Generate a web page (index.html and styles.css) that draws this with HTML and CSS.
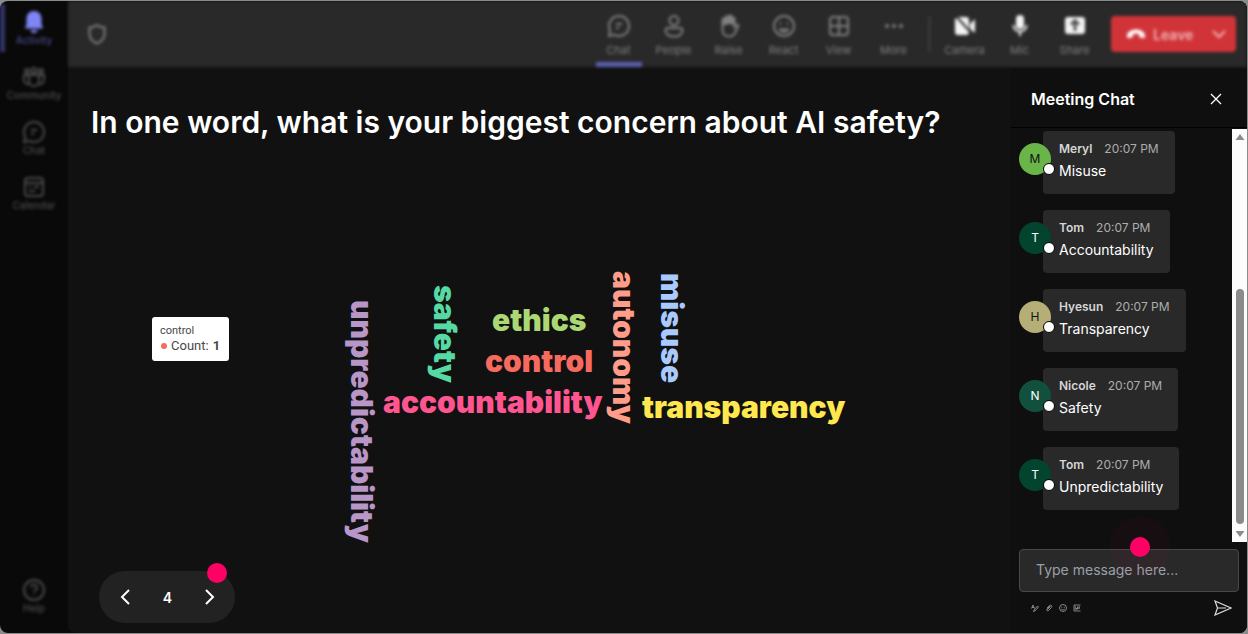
FILE: index.html
```html
<!DOCTYPE html>
<html lang="en">
<head>
<meta charset="utf-8">
<title>Meeting</title>
<link rel="stylesheet" href="styles.css">
</head>
<body>
<div class="shell">
  <nav class="rail">
    <button class="rail-item rail-active"><svg class="rail-icon" viewBox="0 0 24 24"><path class="solid" d="M12 1C7.500 1 4.500 4.500 4.500 9v5L3 18.500h18L19.500 14V9C19.500 4.500 16.500 1 12 1zM8.500 20a3.500 3 0 0 0 7 0z"/></svg>Activity</button>
    <button class="rail-item"><svg class="rail-icon" viewBox="0 0 24 24"><circle cx="12" cy="5.500" r="2.500"/><circle cx="5" cy="6" r="2"/><circle cx="19" cy="6" r="2"/><path d="M7 10h10v6a5 5 0 0 1-10 0zM7 10H2v5a4 4 0 0 0 5 4M17 10h5v5a4 4 0 0 1-5 4"/></svg>Community</button>
    <button class="rail-item"><svg class="rail-icon" viewBox="0 0 24 24"><path d="M12 2a10 10 0 1 1-4.700 18.800L2 22l1.200-5.300A10 10 0 0 1 12 2zM9 10h6M9 14h3"/></svg>Chat</button>
    <button class="rail-item"><svg class="rail-icon" viewBox="0 0 24 24"><rect x="3" y="3" width="18" height="18" rx="3"/><path d="M3 8h18M7 12h2M12 12h5M7 16h6"/></svg>Calendar</button>
    <button class="rail-item rail-help"><svg class="rail-icon" viewBox="0 0 24 24"><circle cx="12" cy="12" r="10"/><path d="M9 9.500a3 3 0 1 1 4.500 2.600c-1 .6-1.500 1-1.500 2.100M12 16.500v1"/></svg>Help</button>
  </nav>

  <div class="main">
    <header class="toolbar">
      <svg class="shield" viewBox="0 0 24 24"><path d="M12 3c2 1.600 4.500 2.500 7.500 2.600V12c0 4.500-3 7.500-7.500 9.500C7.500 19.500 4.500 16.500 4.500 12V5.600C7.500 5.500 10 4.600 12 3z"/></svg>
      <button class="tool tool-current"><svg class="tool-icon" viewBox="0 0 24 24"><path d="M12 2a10 10 0 1 1-4.700 18.800L2 22l1.200-5.300A10 10 0 0 1 12 2zM9 10h6M9 14h3"/></svg>Chat</button>
      <button class="tool"><svg class="tool-icon" viewBox="0 0 24 24"><circle cx="12" cy="6.500" r="4.500"/><path d="M6 14h12a2.500 2.500 0 0 1 2.500 2.500C20.500 20 17 22.500 12 22.500S3.500 20 3.500 16.500A2.500 2.500 0 0 1 6 14z"/></svg>People</button>
      <button class="tool"><svg class="tool-icon" viewBox="0 0 24 24"><path class="solid" d="M5 12V6l3-3 4-2 3 1 3 3v6l-6-1z"/><path d="M5.500 13V6a1.500 1.500 0 0 1 3 0V4a1.500 1.500 0 0 1 3 0V3a1.500 1.500 0 0 1 3 0v2a1.500 1.500 0 0 1 3 0v8l1.800-2c1-.8 2.500 0 2 1.200L18 19c-1.200 2.300-3 3.500-6 3.500-4 0-6.500-3-6.500-7z"/></svg>Raise</button>
      <button class="tool"><svg class="tool-icon" viewBox="0 0 24 24"><circle cx="12" cy="12" r="10"/><path d="M8.500 8.500v2M15.500 8.500v2M7 15.500h10M8 16c2 2.500 6 2.500 8 0"/></svg>React</button>
      <button class="tool"><svg class="tool-icon" viewBox="0 0 24 24"><rect x="3" y="3" width="18" height="18" rx="3"/><path d="M12 3v18M3 12h18"/></svg>View</button>
      <button class="tool"><svg class="tool-icon" viewBox="0 0 24 24"><g class="solid"><circle cx="5" cy="12" r="2"/><circle cx="12" cy="12" r="2"/><circle cx="19" cy="12" r="2"/></g></svg>More</button>
      <span class="divider"></span>
      <button class="tool tool-bright"><svg class="tool-icon" viewBox="0 0 24 24"><path class="solid" d="M4 3h9a3 3 0 0 1 3 3v12a3 3 0 0 1-3 3H5a3 3 0 0 1-3-3V5zM17 10l5-5v14l-5-4z"/><path class="slash" d="M2 1l20 22"/></svg>Camera</button>
      <button class="tool tool-bright"><svg class="tool-icon" viewBox="0 0 24 24"><rect class="solid" x="8" y="1" width="8" height="14" rx="4"/><path d="M5.500 11a6.500 6.500 0 0 0 13 0M12 18v4"/></svg>Mic</button>
      <button class="tool tool-bright"><svg class="tool-icon" viewBox="0 0 24 24"><rect class="solid" x="2" y="3" width="20" height="17" rx="3"/><path class="cutout" d="M12 17V7M8 10.500L12 6.500l4 4"/></svg>Share</button>
      <button class="leave"><svg class="phone" viewBox="0 0 20 12"><path d="M1 8C1 4 5 1.500 10 1.500S19 4 19 8c0 1.500-.5 2.300-1.500 2.100L14.200 9.500c-.8-.2-1-.8-1-1.500L13 6.300c-2-.6-4-.6-6 0L6.800 8c0 .7-.2 1.300-1 1.500l-3.300.6C1.500 10.300 1 9.500 1 8z"/></svg>Leave<svg class="caret" viewBox="0 0 16 16"><path d="M2 5l6 6 6-6"/></svg></button>
    </header>

    <div class="content">
      <main class="stage">
        <h1 class="question">In one word, what is your biggest concern about AI safety?</h1>
        <div class="cloud">
          <span class="word vertical unpredictability">unpredictability</span>
          <span class="word vertical safety">safety</span>
          <span class="word ethics">ethics</span>
          <span class="word control">control</span>
          <span class="word accountability">accountability</span>
          <span class="word vertical autonomy">autonomy</span>
          <span class="word vertical misuse">misuse</span>
          <span class="word transparency">transparency</span>
          <div class="tooltip">
            <span class="tip-name">control</span>
            <span class="tip-row"><span class="tip-dot"></span>Count: <b>1</b></span>
          </div>
        </div>
        <div class="pager">
          <button class="page-btn" aria-label="Previous"><svg class="chevron" viewBox="0 0 16 16"><path d="M12 1L5 8l7 7"/></svg></button>
          <span class="page-no">4</span>
          <button class="page-btn" aria-label="Next"><svg class="chevron" viewBox="0 0 16 16"><path d="M4 1l7 7-7 7"/></svg></button>
          <span class="marker marker-pager"></span>
        </div>
      </main>

      <aside class="chat">
        <div class="chat-head">
          <h2 class="chat-title">Meeting Chat</h2>
          <button class="close" aria-label="Close"><svg class="close-icon" viewBox="0 0 12 12"><path d="M1 1l10 10M11 1L1 11"/></svg></button>
        </div>
        <div class="chat-body">
          <div class="messages">
            <article class="message"><span class="avatar lime">M</span><div class="card"><div class="meta"><b class="name">Meryl</b><time>20:07 PM</time></div><p class="text">Misuse</p></div></article>
            <article class="message"><span class="avatar forest">T</span><div class="card"><div class="meta"><b class="name">Tom</b><time>20:07 PM</time></div><p class="text">Accountability</p></div></article>
            <article class="message"><span class="avatar sand">H</span><div class="card"><div class="meta"><b class="name">Hyesun</b><time>20:07 PM</time></div><p class="text">Transparency</p></div></article>
            <article class="message"><span class="avatar pine">N</span><div class="card"><div class="meta"><b class="name">Nicole</b><time>20:07 PM</time></div><p class="text">Safety</p></div></article>
            <article class="message"><span class="avatar forest">T</span><div class="card"><div class="meta"><b class="name">Tom</b><time>20:07 PM</time></div><p class="text">Unpredictability</p></div></article>
          </div>
          <div class="scrollbar">
            <svg class="arrow" viewBox="0 0 10 8"><path d="M5 1l4.500 6h-9z"/></svg>
            <span class="thumb"></span>
            <svg class="arrow" viewBox="0 0 10 8"><path d="M5 7L.5 1h9z"/></svg>
          </div>
        </div>
        <div class="composer">
          <input class="field" type="text" placeholder="Type message here..." aria-label="Message">
          <span class="marker marker-chat"></span>
          <div class="actions">
            <button class="mini" aria-label="Format"><svg class="mini-icon" viewBox="0 0 16 16"><path d="M1 9l3-7 3 7M2 7h4M6 12l7-8 2 2-7 8-3 1z"/></svg></button>
            <button class="mini" aria-label="Attach"><svg class="mini-icon" viewBox="0 0 16 16"><path d="M5 11l6-6M4 8l5-5c3-2 6 1 4 4l-6 6c-3 2-5-1-3-3l6-6"/></svg></button>
            <button class="mini" aria-label="Emoji"><svg class="mini-icon" viewBox="0 0 16 16"><circle cx="8" cy="8" r="7"/><path d="M5.500 5.500v2M10.500 5.500v2M4.500 10c2 2.500 5 2.500 7 0"/></svg></button>
            <button class="mini" aria-label="GIF"><svg class="mini-icon" viewBox="0 0 16 16"><path d="M15 2H2v12h13M6 5.500H4.500v5H7V8M9 5v6M14 5.500h-2.500v5M11.500 8H14"/></svg></button>
            <button class="send" aria-label="Send"><svg class="send-icon" viewBox="0 0 18 16"><path d="M1 1l16 7-16 7 2.500-7zM3.500 8H12"/></svg></button>
          </div>
        </div>
      </aside>
    </div>
  </div>
</div>
</body>
</html>
```
FILE: styles.css
```css
*, *::before, *::after { box-sizing: border-box; }

body {
  margin: 0;
  padding: 1px 1px 1px 0;
  background: #8a8c8b;
  font-family: Inter, "Liberation Sans", sans-serif;
  color: #fff;
}

h1, h2, p { margin: 0; }

button {
  margin: 0;
  padding: 0;
  border: 0;
  background: none;
  color: inherit;
  font: inherit;
}

svg {
  display: block;
  fill: none;
  stroke: currentColor;
  stroke-width: 2;
}

.solid { fill: currentColor; stroke: none; }

.shell {
  display: grid;
  grid-template-columns: 68px 1fr;
  min-height: calc(100vh - 2px);
  border-radius: 8px;
  overflow: hidden;
  background: #090909;
}

/* Left rail */
.rail {
  display: flex;
  flex-direction: column;
  padding: 3px 0 13px;
  color: #4c4c4c;
  filter: blur(1px) blur(1px);
}

.rail-item {
  display: flex;
  flex-direction: column;
  align-items: center;
  height: 48px;
  margin-bottom: 7px;
  padding-top: 6px;
  font-size: 10px;
  line-height: 13px;
  font-weight: 500;
}

.rail-active {
  border-left: 5px solid #33356a;
  padding-right: 5px;
  color: #484b8a;
}

.rail-active .rail-icon { color: #7f85f5; }
.rail-icon { width: 24px; height: 24px; }
.rail-help { margin-top: auto; margin-bottom: 0; }

.main {
  display: flex;
  flex-direction: column;
  min-width: 0;
  border-radius: 8px 0 0 8px;
  background: #111;
}

/* Top toolbar */
.toolbar {
  display: flex;
  align-items: center;
  height: 66px;
  padding: 0 11px 0 17px;
  background: #292929;
  color: #808080;
  filter: blur(1px) blur(1px);
}

.shield { width: 24px; height: 24px; margin-right: auto; }

.tool {
  display: flex;
  flex-direction: column;
  align-items: center;
  gap: 5px;
  width: 55px;
  height: 66px;
  padding-top: 13px;
  font-size: 11px;
  line-height: 14px;
}

.tool-icon { width: 24px; height: 24px; }

.tool-current::after {
  content: "";
  width: 46px;
  height: 5px;
  background: #5b5fae;
}

.tool-bright .tool-icon { color: #f4f4f4; }
.slash { stroke: #292929; stroke-width: 2; }
.cutout { stroke: #555; stroke-width: 3; }

.divider {
  width: 1px;
  height: 36px;
  margin: 0 7px 0 8px;
  background: #505050;
}

.leave {
  display: flex;
  align-items: center;
  width: 125px;
  height: 36px;
  margin-left: 9px;
  padding: 0 9px 0 15px;
  border-radius: 4px;
  background: #d13438;
  color: #f0b5b7;
  font-size: 14px;
  font-weight: 600;
}

.phone { width: 20px; height: 12px; margin-right: 7px; fill: #fff; stroke: none; }
.caret { width: 16px; height: 16px; margin-left: auto; }

.content { display: flex; flex: 1; }

/* Presentation area */
.stage {
  display: flex;
  flex: 1;
  flex-direction: column;
  align-items: flex-start;
  padding: 37px 24px 10px 23px;
}

.question {
  font-size: 30px;
  line-height: 36px;
  font-weight: 600;
}

.cloud {
  position: relative;
  flex: 1;
  align-self: stretch;
}

.word {
  position: absolute;
  font-size: 30px;
  line-height: 32px;
  font-weight: 900;
  white-space: nowrap;
}

.vertical { writing-mode: vertical-rl; }

.unpredictability { left: 255px; top: 160px; color: #b896c8; }
.safety { left: 338px; top: 145px; color: #57d9a3; }
.ethics { left: 401px; top: 164px; color: #acd873; }
.control { left: 394px; top: 205px; color: #f76a60; }
.accountability { left: 292px; top: 246px; color: #ff5590; }
.autonomy { left: 517px; top: 131px; color: #ff9d8a; }
.misuse { left: 565px; top: 133px; color: #a8caff; }
.transparency { left: 551px; top: 251px; color: #ffe74f; }

.tooltip {
  position: absolute;
  left: 61px;
  top: 177px;
  display: flex;
  flex-direction: column;
  width: 77px;
  padding: 7px 8px;
  border-radius: 3px;
  background: #fff;
  color: #484848;
  font-family: Roboto, sans-serif;
}

.tip-name { font-size: 11px; line-height: 14px; }

.tip-row {
  display: flex;
  align-items: center;
  gap: 4px;
  font-size: 13px;
  line-height: 16px;
}

.tip-dot {
  width: 6px;
  height: 6px;
  margin-left: 1px;
  border-radius: 50%;
  background: #f76a60;
}

.pager {
  position: relative;
  display: flex;
  align-items: center;
  justify-content: space-between;
  width: 136px;
  height: 52px;
  margin-left: 8px;
  padding: 0 16px 0 17px;
  border-radius: 26px;
  background: #222;
}

.page-btn { padding: 8px 1px; }
.chevron { width: 16px; height: 16px; }
.page-no { font-size: 14px; font-weight: 600; }

.marker {
  position: absolute;
  width: 20px;
  height: 20px;
  border-radius: 50%;
  background: #ff0065;
}

.marker-pager { top: -8px; right: 8px; }

/* Chat panel */
.chat {
  display: flex;
  flex-direction: column;
  width: 236px;
  background: #0f0f0f;
}

.chat-head {
  display: flex;
  align-items: center;
  justify-content: space-between;
  height: 61px;
  padding: 3px 25px 0 20px;
  border-bottom: 1px solid #000;
}

.chat-title { font-size: 16px; line-height: 20px; font-weight: 600; }
.close-icon { width: 12px; height: 12px; stroke-width: 1.3; }

.chat-body {
  display: flex;
  flex: 1;
  justify-content: space-between;
}

.messages {
  display: flex;
  flex-direction: column;
  gap: 16px;
  padding: 3px 0 0 8px;
}

.message { display: flex; align-items: flex-start; }

.avatar {
  position: relative;
  width: 32px;
  height: 32px;
  margin: 12px -8px 0 0;
  border-radius: 50%;
  font-size: 12px;
  line-height: 32px;
  text-align: center;
}

.avatar::after {
  content: "";
  position: absolute;
  right: -4px;
  bottom: 0;
  width: 12px;
  height: 12px;
  border: 1px solid #000;
  border-radius: 50%;
  background: #fff;
}

.lime { background: #6ab54a; color: #111; }
.forest { background: #03442f; }
.sand { background: #b5ae76; color: #111; }
.pine { background: #12503e; }

.card {
  height: 63px;
  padding: 9px 16px;
  border-radius: 4px;
  background: #292929;
}

.meta {
  display: flex;
  gap: 12px;
  font-size: 12px;
  line-height: 18px;
  color: #adadad;
}

.name { font-weight: 600; color: #d6d6d6; }
.text { margin-top: 3px; font-size: 14px; line-height: 20px; }

.scrollbar {
  display: flex;
  flex-direction: column;
  align-items: center;
  width: 15px;
  margin-top: 1px;
  padding: 4px 0;
  background: #fcfcfc;
}

.arrow { width: 10px; height: 8px; fill: #8b8b8b; stroke: none; }

.thumb {
  width: 8px;
  height: 235px;
  margin: auto 0 6px;
  border-radius: 4px;
  background: #8b8b8b;
}

.composer {
  position: relative;
  padding: 7px 8px 17px;
}

.field {
  display: block;
  width: 100%;
  height: 43px;
  padding: 0 16px 2px;
  border: 1px solid #484848;
  border-radius: 4px;
  background: #292929;
  color: #fff;
  font-family: inherit;
  font-size: 14px;
}

.field::placeholder { color: #9aa0a8; opacity: 1; }

.marker-chat {
  left: 119px;
  top: -5px;
  box-shadow: 0 0 0 20px rgba(255, 0, 101, 0.03);
}

.actions {
  display: flex;
  align-items: center;
  gap: 6px;
  margin-top: 8px;
  padding: 0 7px 0 12px;
}

.mini { color: #a8a8a8; }
.mini-icon { width: 8px; height: 8px; stroke-width: 1.5; }
.send { margin-left: auto; color: #ddd; }
.send-icon { width: 18px; height: 16px; stroke-width: 1.2; }
```
